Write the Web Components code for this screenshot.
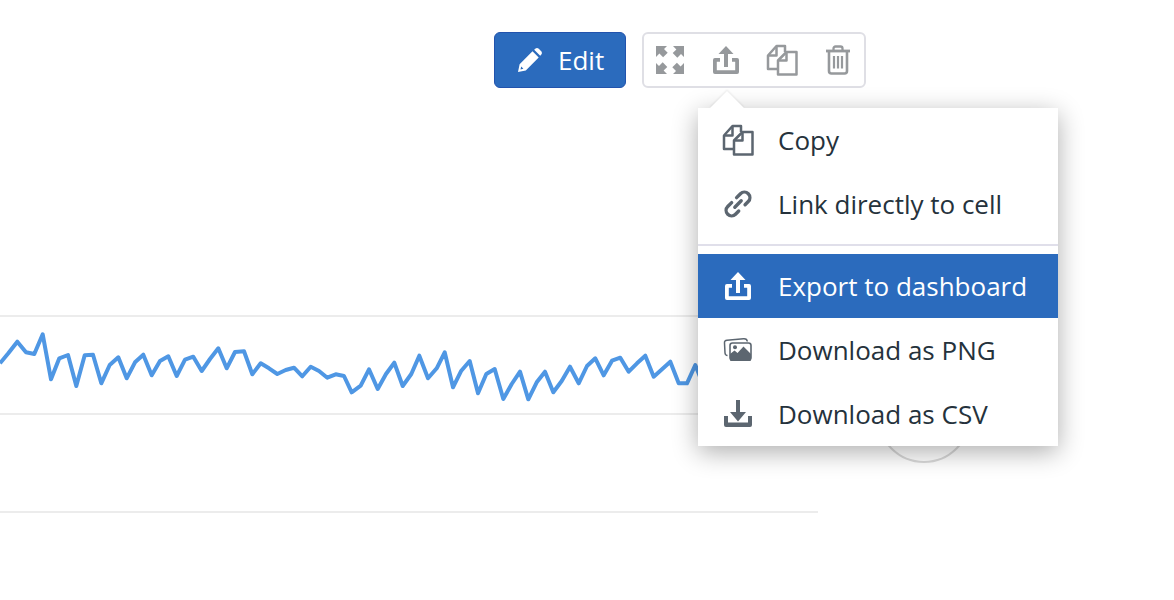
<!DOCTYPE html>
<html lang="en"><head><meta charset="utf-8"><title>Cell</title>
<style>html,body{margin:0;padding:0;background:#fff;overflow:hidden}</style></head>
<body>
<x-app>
  <x-button slot="actions"><x-icon name="pencil" size="26"></x-icon>Edit</x-button>
  <x-toolgroup slot="actions">
    <x-icon name="expand"></x-icon><x-icon name="share"></x-icon><x-icon name="copy"></x-icon><x-icon name="trash"></x-icon>
  </x-toolgroup>
  <x-chart slot="chart"></x-chart>
  <x-menu slot="overlay">
    <x-menu-item icon="copy">Copy</x-menu-item>
    <x-menu-item icon="link">Link directly to cell</x-menu-item>
    <x-menu-divider></x-menu-divider>
    <x-menu-item icon="share" active>Export to dashboard</x-menu-item>
    <x-menu-item icon="image">Download as PNG</x-menu-item>
    <x-menu-item icon="download">Download as CSV</x-menu-item>
  </x-menu>
</x-app>
<script>
const ICONS={
 pencil:`<path fill="currentColor" fill-rule="evenodd" d="M1 25l1.600-7.800L15.500 4.300l6.200 6.200L8.800 23.400zM3.500 22.500l2.900-.7-2.200-2.200z"/><path fill="currentColor" d="M17.200 2.800l1-1a2.600 2.600 0 0 1 3.600 0l2.400 2.400a2.600 2.600 0 0 1 0 3.600l-1 1z"/>`,
 expand:`<g fill="currentColor"><path d="M2 2h11l-3 3 3.700 3.700-4.600 4.600L5.400 9.600 2 13z"/><path d="M2 2h11l-3 3 3.700 3.700-4.600 4.600L5.400 9.600 2 13z" transform="rotate(90 16 16)"/><path d="M2 2h11l-3 3 3.700 3.700-4.600 4.600L5.400 9.600 2 13z" transform="rotate(180 16 16)"/><path d="M2 2h11l-3 3 3.700 3.700-4.600 4.600L5.400 9.600 2 13z" transform="rotate(270 16 16)"/></g>`,
 share:`<path fill="none" stroke="currentColor" stroke-width="3.800" stroke-linejoin="round" d="M10 15.900H4.900V28.100H27.100V15.900H22"/><path fill="currentColor" d="M16 2l7.500 8H18v13h-4V10H8.500z"/>`,
 copy:`<g fill="none" stroke="currentColor" stroke-width="2.500" stroke-linejoin="round"><path d="M12 25H2V11.500L10.500 2H19v6"/><path d="M2 11.500h8.500V2"/><path d="M12 30.500V16.500L20.500 8H30.500v22.500z"/><path d="M12 16.500h8.500V8"/></g>`,
 trash:`<g fill="none" stroke="currentColor" stroke-width="2.300"><path d="M4 7h24" stroke-width="2.800"/><path d="M11.500 7V4.500a2 2 0 0 1 2-2h5a2 2 0 0 1 2 2V7"/><path d="M7 7v20a2.500 2.500 0 0 0 2.500 2.500h13A2.500 2.500 0 0 0 25 27V7" stroke-width="2.600"/><path d="M12 12v12.500M16 12v12.500M20 12v12.500" stroke-width="2.200"/></g>`,
 link:`<g fill="none" stroke="currentColor" stroke-width="3.400" stroke-linecap="round" transform="rotate(-45 16 16)"><path d="M12.500 10.500H7a5.500 5.500 0 0 0 0 11H11.500"/><path d="M20.500 21.500h4.500a5.500 5.500 0 0 0 0-11H19.500"/><path d="M11.500 16h9"/></g>`,
 image:`<path fill="none" stroke="currentColor" stroke-width="1.500" d="M5.500 21.500Q3.300 21.500 3 19L2.500 9Q2.300 6.500 5 6.300L21.500 4.800Q25 4.500 25.300 7.500"/><rect x="8" y="9" width="21" height="17" rx="2.500" fill="#fff" stroke="currentColor" stroke-width="1.600"/><path fill="currentColor" d="M8 24v-4l4.500-3.500 3 2.500 6-6.500 7.500 7.500v6a1 1 0 0 1-1 1H9a1 1 0 0 1-1-1z"/><circle cx="13" cy="13.200" r="2" fill="currentColor"/>`,
 download:`<path fill="currentColor" d="M14 2h4v12h6L16 23.500 8 14h6z"/><path fill="currentColor" d="M2 18h4v6.500h20V18h4v9a2 2 0 0 1-2 2H4a2 2 0 0 1-2-2z"/>`
};
function def(name,css,html,extra){
  customElements.define(name,class extends HTMLElement{
    constructor(){super();this.attachShadow({mode:'open'}).innerHTML=`<style>${css}</style>${html}`;}
    connectedCallback(){extra&&extra.call(this,this.shadowRoot);}
  });
}
def('x-icon',`:host{display:inline-flex;flex:none;line-height:0}svg{display:block}`,'',function(r){
  const s=this.getAttribute('size')||32;
  const t=document.createElement('template');
  t.innerHTML=`<svg xmlns="http://www.w3.org/2000/svg" width="${s}" height="${s}" viewBox="0 0 ${s} ${s}">${ICONS[this.getAttribute('name')]}</svg>`;
  r.appendChild(t.content);
});
def('x-app',`
 :host{display:block;position:relative;width:1174px;height:600px;overflow:hidden;background:#fff;font-family:"Open Sans",sans-serif}
 .actions{display:flex;gap:16px;padding:32px 0 0 494px}
 .chart{margin-top:227px}
`,`<div class="actions"><slot name="actions"></slot></div><div class="chart"><slot name="chart"></slot></div><slot name="overlay"></slot>`);
def('x-button',`
 :host{display:flex;align-items:center;gap:15px;box-sizing:border-box;width:132px;height:56px;padding:0 0 1px 22px;background:#2b6bbd;border:1px solid #2253ad;border-radius:6px;color:#fff;font-size:26px}
`,`<slot></slot>`);
def('x-toolgroup',`
 :host{display:flex;align-items:center;box-sizing:border-box;width:224px;height:56px;padding-left:10px;gap:24px;background:#fff;border:2px solid #dfdfe5;border-radius:6px;color:#96999c}
`,`<slot></slot>`);
def('x-chart',`
 :host{display:block;position:relative;width:818px}
 .row{height:98px;box-sizing:border-box;border-top:2px solid #ececec}
 .row:last-of-type{height:2px}
 svg.line{position:absolute;left:0;top:0;overflow:visible}
 .ring{position:absolute;left:877px;top:54px;width:94px;height:94px;box-sizing:border-box;border:2px solid #d9d9d9;border-radius:50%}
`,`<div class="row"></div><div class="row"></div><div class="row"></div><div class="ring"></div><svg class="line" width="818" height="98"></svg>`,function(r){
  const a=[[0,160],[25,130],[52,95],[78,127],[103,132],[128,73],[153,208],[178,145],[204,135],[229,228],[254,136],[279,134],[304,220],[329,165],[355,142],[380,205],[405,157],[430,134],[455,196],[480,153],[505,139],[530,198],[555,149],[580,140],[605,183],[630,147],[655,115],[680,175],[705,126],[732,124],[757,193],[782,160],[807,175],[832,192],[857,180],[882,173],[907,199],[932,170],[957,183],[982,203],[1007,193],[1032,198]];
  const b=[[5,247],[32,227],[57,178],[83,237],[108,192],[133,158],[158,228],[184,192],[208,137],[234,205],[260,175],[284,127],[309,232],[334,182],[359,153],[384,250],[409,192],[434,177],[460,267],[485,222],[510,185],[535,268],[560,217],[585,185],[610,247],[635,213],[660,170],[686,220],[711,168],[736,145],[761,196],[786,152],[811,143],[836,185],[861,160],[886,137],[911,200],[936,178],[961,155],[986,220],[1011,220],[1036,165],[1060,225]];
  const pts=[...a.map(p=>[p[0]/3,p[1]/3-5]),...b.map(p=>[350+p[0]/3,p[1]/3-5])].map(p=>p[0].toFixed(1)+','+p[1].toFixed(1)).join(' ');
  const svg=r.querySelector('svg.line');
  const pl=document.createElementNS('http://www.w3.org/2000/svg','polyline');
  pl.setAttribute('points',pts);pl.setAttribute('fill','none');pl.setAttribute('stroke','#4f97e4');pl.setAttribute('stroke-width','4');pl.setAttribute('stroke-linejoin','round');
  svg.appendChild(pl);
});
def('x-menu',`
 :host{display:block;position:absolute;left:698px;top:108px;width:360px;box-sizing:border-box;background:#fff;box-shadow:0 6px 24px rgba(0,0,0,.32);color:#25323c;font-size:26px}
 .arrow{position:absolute;left:17px;top:-12px;width:24px;height:24px;background:#fff;transform:rotate(45deg);box-shadow:-1px -1px 2px rgba(0,0,0,.07)}
 .body{position:relative;background:#fff}
`,`<div class="arrow"></div><div class="body"><slot></slot></div>`);
def('x-menu-divider',`:host{display:block;height:2px;margin:8px 0 8px;background:#e0dfea}`,'');
def('x-menu-item',`
 :host{display:flex;align-items:center;height:64px;padding-left:24px;color:inherit;white-space:nowrap}
 :host([active]){background:#2b6bbd;color:#fff}
 .i{width:32px;height:32px;margin-right:24px;color:#5c6670;flex:none}
 :host([active]) .i{color:#fff}
`,`<span class="i"></span><slot></slot>`,function(r){
  const i=r.querySelector('.i');
  if(!i.firstChild){const e=document.createElement('x-icon');e.setAttribute('name',this.getAttribute('icon'));i.appendChild(e);}
});
</script>
</body></html>
